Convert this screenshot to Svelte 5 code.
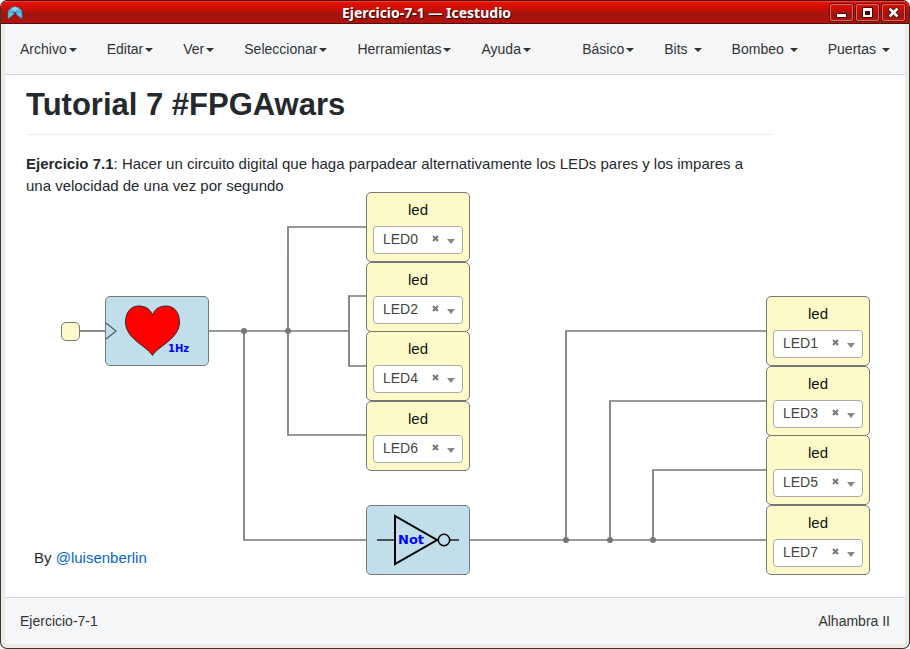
<script>
  const editMenus = ['Archivo', 'Editar', 'Ver', 'Seleccionar', 'Herramientas', 'Ayuda'];
  const blockMenus = [
    { name: 'Básico', spaced: false },
    { name: 'Bits', spaced: true },
    { name: 'Bombeo', spaced: true },
    { name: 'Puertas', spaced: true }
  ];

  const pins = ['LED0', 'LED1', 'LED2', 'LED3', 'LED4', 'LED5', 'LED6', 'LED7'];

  let leds = $state([
    { id: 'led-a', x: 361, y: 117, pin: 'LED0' },
    { id: 'led-b', x: 361, y: 187, pin: 'LED2' },
    { id: 'led-c', x: 361, y: 256, pin: 'LED4' },
    { id: 'led-d', x: 361, y: 326, pin: 'LED6' },
    { id: 'led-e', x: 761, y: 221, pin: 'LED1' },
    { id: 'led-f', x: 761, y: 291, pin: 'LED3' },
    { id: 'led-g', x: 761, y: 360, pin: 'LED5' },
    { id: 'led-h', x: 761, y: 430, pin: 'LED7' }
  ]);

  const wires = [
    'M75 256H100',
    'M204 256H344',
    'M361 152H283V360H361',
    'M361 221H344V291H361',
    'M239 256V465H361',
    'M465 465H761',
    'M561 465V256H761',
    'M605 465V326H761',
    'M648 465V395H761'
  ];
  const junctions = [[239, 256], [283, 256], [561, 465], [605, 465], [648, 465]];
</script>

<div class="window">
  <header class="titlebar">
    <svg class="logo" width="16" height="14" viewBox="0 0 16 14" aria-hidden="true">
      <path d="M1 5 4 2 7 1v7L1 13z" fill="#62c3ec" stroke="#276c96" stroke-width=".6" />
      <path d="M15 5 12 2 9 1v7l6 5z" fill="#62c3ec" stroke="#276c96" stroke-width=".6" />
      <path d="M4 2 8 .6 12 2 8 6.5z" fill="#8bdcfa" stroke="#347da5" stroke-width=".5" />
      <path d="M1 5l6 2M15 5 9 7" stroke="#2e83ad" stroke-width=".7" />
    </svg>
    <h2>Ejercicio-7-1 — Icestudio</h2>
    <div class="controls">
      <button aria-label="Minimizar">
        <svg width="21" height="15" viewBox="0 0 21 15"><path d="M5 8h11v5H5z" fill="#4d0603" /><path d="M6 9h9v3H6z" fill="#fff" /></svg>
      </button>
      <button aria-label="Maximizar">
        <svg width="21" height="15" viewBox="0 0 21 15"><path d="M5 2h11v11H5z" fill="#4d0603" /><path d="M6 3h9v9H6zM8 6v4h5V6z" fill="#fff" fill-rule="evenodd" /></svg>
      </button>
      <button aria-label="Cerrar">
        <svg width="21" height="15" viewBox="0 0 21 15"><path d="M6 3l9 9M15 3l-9 9" stroke="#4d0603" stroke-width="4.4" /><path d="M6.500 3.500l8 8M14.500 3.500l-8 8" stroke="#fff" stroke-width="2.6" /></svg>
      </button>
    </div>
  </header>

  <div class="frame">
    <nav>
      <div class="menus">
        {#each editMenus as name}
          <button>{name}<span class="caret"></span></button>
        {/each}
      </div>
      <div class="menus">
        {#each blockMenus as menu}
          <button class:spaced={menu.spaced}>{menu.name}<span class="caret"></span></button>
        {/each}
      </div>
    </nav>

    <main>
      <article>
        <h1>Tutorial 7 #FPGAwars</h1>
        <p><strong>Ejercicio 7.1</strong>: Hacer un circuito digital que haga parpadear alternativamente los LEDs pares y los impares a una velocidad de una vez por segundo</p>
      </article>

      <svg class="wires" width="900" height="522" viewBox="0 0 900 522" aria-hidden="true">
        {#each wires as d}
          <path {d} />
        {/each}
        {#each junctions as [cx, cy]}
          <circle {cx} {cy} r="3" />
        {/each}
      </svg>

      <div class="block input-port"></div>

      <div class="block heart">
        <svg width="102" height="68" viewBox="1 1 102 68">
          <path d="M1 27l10 8-10 8" fill="none" stroke="#555" stroke-width="1.2" />
          <path d="M47.5 59.5C42 50 20.5 43 20.500 26 20.500 16 26 10 34 10 40 10 46 13 47.5 19.5 49 13 55 10 61 10 69 10 74.500 16 74.500 26 74.500 43 53 50 47.5 59.5Z" fill="#f00" stroke="#222" stroke-width=".9" />
          <text x="63" y="56" font-size="10">1Hz</text>
        </svg>
      </div>

      <div class="block gate">
        <svg width="102" height="68" viewBox="1 1 102 68">
          <path d="M11 35h18M84 35h9" stroke="#222" stroke-width="1.3" />
          <path d="M29 11v48l42-24z" fill="none" stroke="#000" stroke-width="2" />
          <circle cx="78" cy="35" r="5.7" fill="none" stroke="#000" stroke-width="1.5" />
          <text x="32" y="39" font-size="13">Not</text>
        </svg>
      </div>

      {#each leds as led (led.id)}
        <div class="block led" style:left="{led.x}px" style:top="{led.y}px">
          <label for={led.id}>led</label>
          <div class="picker">
            <select id={led.id} bind:value={led.pin}>
              {#each pins as pin}
                <option value={pin}>{pin}</option>
              {/each}
            </select>
            <button class="clear" aria-label="Quitar" onclick={() => (led.pin = '')}>
              <svg width="7" height="7" viewBox="0 0 7 7"><path d="M1 1l5 5M6 1 1 6" stroke="#777" stroke-width="2" /></svg>
            </button>
            <span class="arrow"></span>
          </div>
        </div>
      {/each}

      <p class="author">By <a href="#luisenberlin">@luisenberlin</a></p>
    </main>

    <footer>
      <span>Ejercicio-7-1</span>
      <span>Alhambra II</span>
    </footer>
  </div>
</div>

<style>
  :global(body) {
    margin: 0;
    background: #fff;
  }

  .window {
    box-sizing: border-box;
    display: flex;
    flex-direction: column;
    min-height: 100vh;
    border: 1px solid #3a3433;
    border-top-color: #4a1010;
    border-radius: 7px;
    overflow: hidden;
    background: #efebe7;
    color: #333;
    font: 14px/20px "Liberation Sans", Arial, sans-serif;
  }

  button {
    padding: 0;
    border: 0;
    background: none;
    color: inherit;
    font: inherit;
  }

  .titlebar {
    box-sizing: border-box;
    display: flex;
    align-items: center;
    gap: 4px;
    height: 23px;
    padding: 0 4px 0 6px;
    border-top: 1px solid #f0402c;
    border-bottom: 1px solid #560b08;
    background: linear-gradient(#e51103, #c90f06 35%, #9e150f 58%, #b3130b);
  }

  .titlebar h2 {
    flex: 1;
    margin: 0;
    color: #fff;
    font: bold 14px/20px "Noto Sans", sans-serif;
    text-align: center;
    text-shadow: 1px 1px 1px #300;
  }

  .controls {
    display: flex;
    gap: 3px;
  }

  .controls button {
    width: 23px;
    height: 17px;
    border: 1px solid #d9675f;
    border-radius: 2px;
    box-shadow: 0 0 0 1px #6f0b07;
  }

  .controls svg {
    display: block;
  }

  .frame {
    flex: 1;
    display: flex;
    flex-direction: column;
    margin: 0 4px 4px;
  }

  nav {
    display: flex;
    justify-content: space-between;
    border-bottom: 1px solid #d3d6da;
    background: #f5f6f8;
  }

  .menus {
    display: flex;
  }

  .menus button {
    padding: 15px;
    white-space: nowrap;
  }

  .caret {
    display: inline-block;
    margin-left: 2px;
    border: 4px solid transparent;
    border-top-color: #333;
    border-bottom: 0;
    vertical-align: middle;
  }

  .spaced .caret {
    margin-left: 6px;
  }

  main {
    position: relative;
    flex: 1;
    min-height: 522px;
    background: #fff;
    color: #24292e;
    font-size: 15px;
    line-height: 22px;
  }

  article {
    max-width: 747px;
    padding: 10px 21px 0;
  }

  h1 {
    margin: 0 0 18px;
    padding-bottom: 10px;
    border-bottom: 1px solid #eaecef;
    font-size: 31px;
    line-height: 39px;
  }

  p {
    margin: 0;
  }

  article p {
    padding-right: 16px;
  }

  .author {
    position: absolute;
    top: 472px;
    left: 29px;
  }

  a {
    color: #0366d6;
    text-decoration: none;
  }

  .wires {
    position: absolute;
    top: 0;
    left: 0;
    fill: none;
    stroke: #777;
    stroke-width: 1.7;
  }

  .wires circle {
    fill: #777;
    stroke: none;
  }

  .block {
    position: absolute;
    box-sizing: border-box;
    width: 104px;
    height: 70px;
    border: 1px solid #777;
    border-radius: 5px;
    background: #c0dfeb;
  }

  .block svg {
    display: block;
  }

  .block text {
    fill: #00f;
    font-family: "DejaVu Sans", sans-serif;
    font-weight: bold;
  }

  .input-port {
    top: 247px;
    left: 56px;
    width: 19px;
    height: 19px;
    background: #fcfac9;
  }

  .heart {
    top: 221px;
    left: 100px;
  }

  .gate {
    top: 430px;
    left: 361px;
  }

  .led {
    display: flex;
    flex-direction: column;
    gap: 5px;
    padding: 6px;
    background: #fcfac9;
    color: #111;
  }

  .led label {
    text-align: center;
  }

  .picker {
    position: relative;
    display: flex;
  }

  select {
    appearance: none;
    box-sizing: border-box;
    width: 100%;
    height: 28px;
    padding: 0 9px 2px;
    border: 1px solid #aaa;
    border-radius: 4px;
    background: #fff;
    color: #444;
    font: 14px/20px "Liberation Sans", Arial, sans-serif;
  }

  .clear {
    position: absolute;
    top: 9px;
    right: 24px;
  }

  .arrow {
    position: absolute;
    top: 13px;
    right: 8px;
    border: 4px solid transparent;
    border-top: 5px solid #888;
    border-bottom: 0;
  }

  footer {
    display: flex;
    justify-content: space-between;
    padding: 13px 15px;
    border-top: 1px solid #d3d6da;
    background: #f5f6f8;
  }
</style>
